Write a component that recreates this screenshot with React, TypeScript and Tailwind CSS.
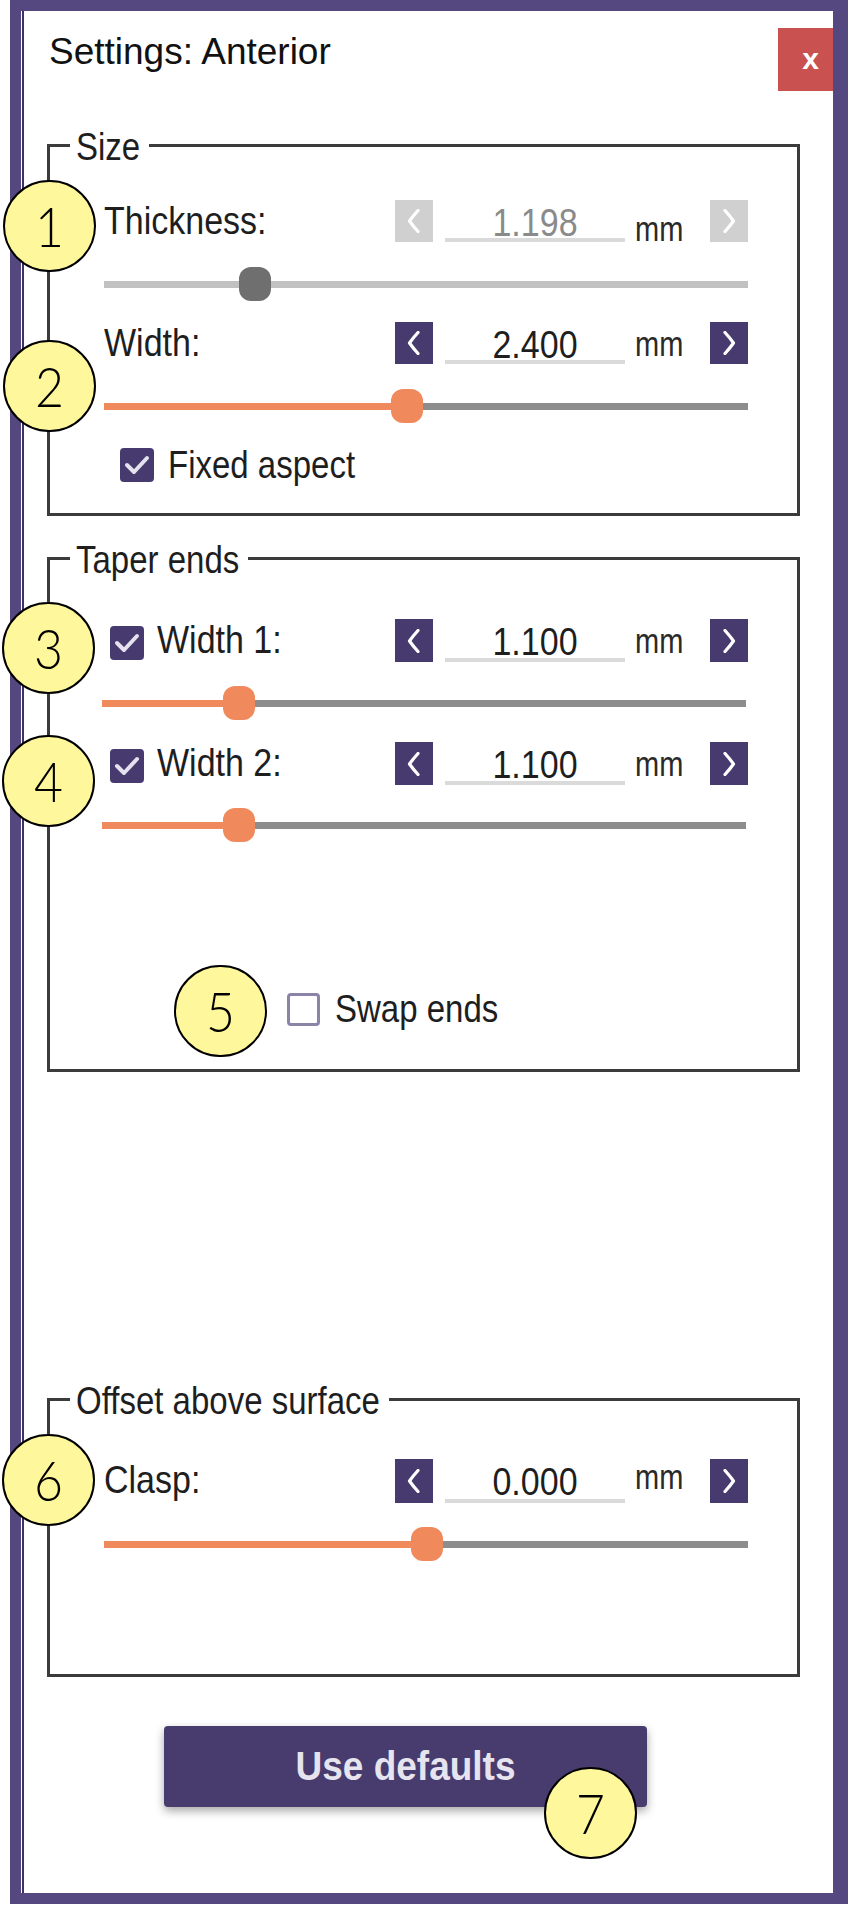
import { ReactNode } from 'react'

const FONT = "font-['Liberation_Sans',Arial,sans-serif]"

function Chevron({ dir }: { dir: 'left' | 'right' }) {
  return (
    <svg width="14" height="24" viewBox="0 0 14 24" fill="none">
      <path
        d={dir === 'left' ? 'M11 1.5 Q6 7 2.5 12 Q6 17 11 22.5' : 'M3 1.5 Q8 7 11.5 12 Q8 17 3 22.5'}
        stroke="white"
        strokeWidth="3.2"
        strokeLinecap="round"
        strokeLinejoin="round"
      />
    </svg>
  )
}

function StepButton({ dir, disabled }: { dir: 'left' | 'right'; disabled?: boolean }) {
  return (
    <div
      className={`flex items-center justify-center w-[38px] h-full ${
        disabled ? 'bg-[#d0d0d0]' : 'bg-[#473a6e]'
      }`}
    >
      <Chevron dir={dir} />
    </div>
  )
}

function CheckBox({ checked }: { checked?: boolean }) {
  if (!checked) {
    return <div className="w-[33px] h-[33px] rounded-[4px] border-[3px] border-[#8b84a8] bg-white" />
  }
  return (
    <div className="flex items-center justify-center w-[34px] h-[34px] rounded-[4px] bg-[#473a6e]">
      <svg width="34" height="34" viewBox="0 0 34 34" fill="none">
        <path d="M7 17 L14 24 L27 10" stroke="#e4e2ee" strokeWidth="4" strokeLinecap="round" strokeLinejoin="round" />
      </svg>
    </div>
  )
}

function ValueRow({
  label,
  value,
  disabled,
  checkbox,
  mmPad = 8,
  height = 42,
}: {
  label: string
  value: string
  disabled?: boolean
  checkbox?: boolean
  mmPad?: number
  height?: number
}) {
  return (
    <div className="flex items-start" style={{ height }}>
      <div className="flex-1 flex items-start">
        {checkbox && (
          <div className="ml-[6px] mt-[7px] mr-[13px]">
            <CheckBox checked />
          </div>
        )}
        <span className="inline-block scale-y-[1.15] text-[34px] leading-[34px] text-[#1e1e1e] mt-[3px]">{label}</span>
      </div>
      <StepButton dir="left" disabled={disabled} />
      <div
        className={`ml-[12px] w-[180px] h-full border-b-4 border-[#dadada] text-center pt-[5px] ${
          disabled ? 'text-[#8a8a8a]' : 'text-[#1e1e1e]'
        }`}
      >
        <span className="inline-block scale-y-[1.15] text-[34px] leading-[34px]">{value}</span>
      </div>
      <div className="ml-[10px] w-[75px]" style={{ paddingTop: mmPad }}>
        <span className="inline-block scale-y-[1.2] text-[29px] leading-[29px] text-[#2a2a2a]">mm</span>
      </div>
      <StepButton dir="right" disabled={disabled} />
    </div>
  )
}

function Slider({ pct, disabled }: { pct: number; disabled?: boolean }) {
  return (
    <div className="relative h-[34px] flex items-center">
      <div className="flex w-full h-[7px]">
        <div style={{ width: `${pct}%` }} className={disabled ? 'bg-[#c1c1c1]' : 'bg-[#f0895c]'} />
        <div className={`flex-1 ${disabled ? 'bg-[#c1c1c1]' : 'bg-[#8d8d8d]'}`} />
      </div>
      <div
        style={{ left: `calc(${pct}% - 16px)` }}
        className={`absolute top-0 w-[32px] h-[34px] rounded-[12px] ${disabled ? 'bg-[#6f6f6f]' : 'bg-[#f0895c]'}`}
      />
    </div>
  )
}

function Group({ title, className, children }: { title: string; className: string; children: ReactNode }) {
  return (
    <div className={`relative ml-[23px] w-[753px] border-[3px] border-[#3b3b3b] pl-[54px] pr-[49px] ${className}`}>
      <div className="absolute top-[-17px] left-[20px] bg-white pl-[6px] pr-[9px] text-[33px] leading-[33px] text-[#1e1e1e]">
        <span className="inline-block scale-y-[1.15]">{title}</span>
      </div>
      {children}
    </div>
  )
}

function Marker({ n, className }: { n: number; className: string }) {
  return (
    <div
      className={`absolute flex items-center justify-center w-[93px] h-[92px] rounded-full border-2 border-black bg-[#fff79b] font-['Lato',sans-serif] font-light text-[50px] leading-none text-black ${className}`}
    >
      <span className="inline-block scale-y-[1.1]">{n}</span>
    </div>
  )
}

export default function App() {
  return (
    <div className={`relative w-[848px] h-[1906px] bg-white ${FONT}`}>
      <div className="ml-[10px] w-[838px] h-[1904px] border-solid border-[#55477f] border-t-[11px] border-l-[11px] border-r-[15px] border-b-[11px]">
        <div className="h-full ml-px border-l-2 border-[#3d3364] flex flex-col">
          {/* title bar */}
          <div className="flex justify-between pl-[25px] pt-[17px]">
            <div className="mt-[3px] text-[37px] leading-[41px] text-[#111]">Settings: Anterior</div>
            <div className="flex items-center justify-center w-[55px] h-[63px] bg-[#c9514f] pl-[10px] text-white text-[30px] font-bold leading-none pb-[2px]">
              x
            </div>
          </div>

          <Group title="Size" className="mt-[53px] h-[372px] pt-[53px]">
            <ValueRow label="Thickness:" value="1.198" disabled mmPad={15} />
            <div className="mt-[25px]">
              <Slider pct={23.4} disabled />
            </div>
            <div className="mt-[21px]">
              <ValueRow label="Width:" value="2.400" />
            </div>
            <div className="mt-[25px]">
              <Slider pct={47} />
            </div>
            <div className="mt-[25px] flex items-center">
              <div className="ml-[16px] mr-[14px]">
                <CheckBox checked />
              </div>
              <span className="inline-block scale-y-[1.15] text-[33px] leading-[34px] text-[#1e1e1e]">Fixed aspect</span>
            </div>
          </Group>

          <Group title="Taper ends" className="mt-[41px] h-[515px] pt-[59px]">
            <ValueRow label="Width 1:" value="1.100" checkbox height={43} />
            <div className="mt-[24px] -ml-[2px] mr-[2px]">
              <Slider pct={21.2} />
            </div>
            <div className="mt-[22px]">
              <ValueRow label="Width 2:" value="1.100" checkbox height={43} />
            </div>
            <div className="mt-[23px] -ml-[2px] mr-[2px]">
              <Slider pct={21.2} />
            </div>
            <div className="mt-[150px] ml-[183px] flex items-center">
              <CheckBox />
              <span className="ml-[15px] inline-block scale-y-[1.15] text-[33px] leading-[34px] text-[#1e1e1e]">Swap ends</span>
            </div>
          </Group>

          <Group title="Offset above surface" className="mt-[326px] h-[279px] pt-[58px]">
            <ValueRow label="Clasp:" value="0.000" mmPad={4} height={44} />
            <div className="mt-[24px]">
              <Slider pct={50.1} />
            </div>
          </Group>

          <div className="mt-[49px] ml-[140px] flex items-center justify-center w-[483px] h-[81px] rounded-[4px] bg-[#483b6d] shadow-[0_4px_10px_rgba(0,0,0,0.35)] text-[37px] font-bold text-[#e6e4ee]">
            <span className="inline-block scale-y-[1.1]">Use defaults</span>
          </div>
        </div>
      </div>

      <Marker n={1} className="left-[3px] top-[180px]" />
      <Marker n={2} className="left-[3px] top-[340px]" />
      <Marker n={3} className="left-[2px] top-[602px]" />
      <Marker n={4} className="left-[2px] top-[735px]" />
      <Marker n={5} className="left-[174px] top-[965px]" />
      <Marker n={6} className="left-[2px] top-[1434px]" />
      <Marker n={7} className="left-[544px] top-[1767px]" />
    </div>
  )
}
